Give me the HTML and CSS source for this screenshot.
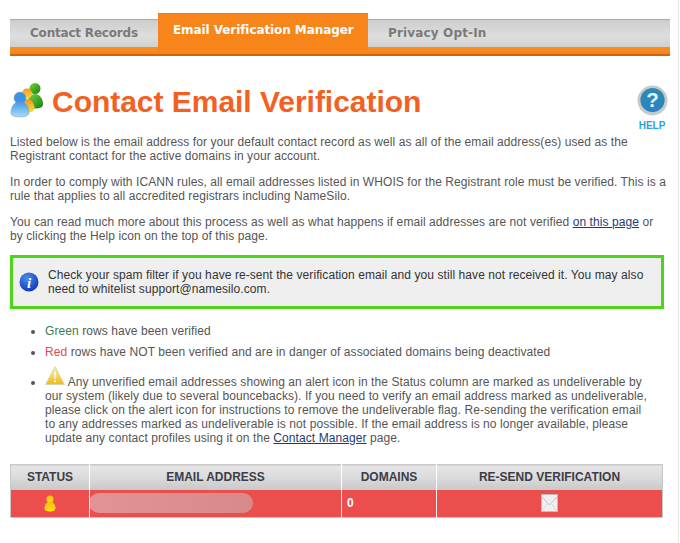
FILE: index.html
```html
<!DOCTYPE html>
<html lang="en">
<head>
<meta charset="utf-8">
<title>Contact Email Verification</title>
<link rel="stylesheet" href="styles.css">
</head>
<body>
<div class="page">
  <nav class="tabs">
    <a class="tab tab-first">Contact Records</a>
    <a class="tab tab-active">Email Verification Manager</a>
    <a class="tab tab-last">Privacy Opt-In</a>
  </nav>
  <header class="head">
    <svg class="people" width="36" height="36" viewBox="0 0 36 36">
      <defs>
        <linearGradient id="gb" x1="0" y1="0" x2="0" y2="1"><stop offset="0" stop-color="#3f97e8"/><stop offset="1" stop-color="#a9dcf7"/></linearGradient>
        <linearGradient id="gg" x1="0" y1="0" x2="1" y2="1"><stop offset="0" stop-color="#7bd63f"/><stop offset="1" stop-color="#14800e"/></linearGradient>
        <linearGradient id="gy" x1="0" y1="0" x2="0" y2="1"><stop offset="0" stop-color="#f7952a"/><stop offset="1" stop-color="#f8e02c"/></linearGradient>
      </defs>
      <circle cx="25" cy="5.500" r="5.500" fill="url(#gg)"/>
      <path d="M17 22c0-7 3.500-11 8-11s8 4.500 8 10c0 3.500-3 4.500-8 4.500s-8-1-8-3.500z" fill="url(#gg)"/>
      <circle cx="17" cy="10.500" r="5" fill="url(#gy)"/>
      <path d="M10 27c0-7 3-11 7-11s7.500 4 7.500 9c0 3.500-3.500 4.500-7.500 4.500s-7-.5-7-2.500z" fill="url(#gy)"/>
      <circle cx="10" cy="15" r="6" fill="#3c92e2" stroke="#8a97a8" stroke-width=".5"/>
      <path d="M1 30c0-7 4-11.500 9-11.500s9 4.500 9 11c0 3.500-4 4.500-9 4.500s-9-1-9-4z" fill="url(#gb)" stroke="#8a97a8" stroke-width=".5"/>
    </svg>
    <h1 class="title">Contact Email Verification</h1>
    <div class="help">
      <svg width="31" height="31" viewBox="0 0 32 32">
        <defs><linearGradient id="gh" x1="0" y1="0" x2="0" y2="1"><stop offset="0" stop-color="#2a8db5"/><stop offset="1" stop-color="#2a82c0"/></linearGradient></defs>
        <circle cx="16" cy="16" r="15.500" fill="#c9c9c9"/>
        <circle cx="16" cy="15.500" r="12.500" fill="url(#gh)"/>
        <text class="help-mark" x="16" y="23" text-anchor="middle">?</text>
      </svg>
      <span class="help-label">HELP</span>
    </div>
  </header>
  <p class="para">Listed below is the email address for your default contact record as well as all of the email address(es) used as the Registrant contact for the active domains in your account.</p>
  <p class="para">In order to comply with ICANN rules, all email addresses listed in WHOIS for the Registrant role must be verified. This is a rule that applies to all accredited registrars including NameSilo.</p>
  <p class="para">You can read much more about this process as well as what happens if email addresses are not verified <a class="link">on this page</a> or by clicking the Help icon on the top of this page.</p>
  <div class="notice">
    <svg class="info" width="20" height="20" viewBox="0 0 20 20">
      <defs><radialGradient id="gi" cx=".4" cy=".3" r=".8"><stop offset="0" stop-color="#4c8df0"/><stop offset="1" stop-color="#0b2fb0"/></radialGradient></defs>
      <circle cx="10" cy="10" r="9.500" fill="url(#gi)"/>
      <text class="info-mark" x="10" y="15.500" text-anchor="middle">i</text>
    </svg>
    <p class="notice-text">Check your spam filter if you have re-sent the verification email and you still have not received it. You may also need to whitelist support@namesilo.com.</p>
  </div>
  <ul class="notes">
    <li class="note"><span class="word-green">Green</span> rows have been verified</li>
    <li class="note"><span class="word-red">Red</span> rows have NOT been verified and are in danger of associated domains being deactivated</li>
    <li class="note"><svg class="alert" width="20" height="20" viewBox="0 0 20 20">
        <defs><linearGradient id="ga" x1="0" y1="0" x2="0" y2="1"><stop offset="0" stop-color="#fff3a8"/><stop offset="1" stop-color="#f3b90f"/></linearGradient></defs>
        <path d="M10 .8 19.400 18.500H.6z" fill="url(#ga)" stroke="#d9d2b0" stroke-width="1" stroke-linejoin="round"/>
        <path d="M9 6h2l-.4 7H9.400z" fill="#fff"/><circle cx="10" cy="15.300" r="1.100" fill="#fff"/>
      </svg> Any unverified email addresses showing an alert icon in the Status column are marked as undeliverable by our system (likely due to several bouncebacks). If you need to verify an email address marked as undeliverable, please click on the alert icon for instructions to remove the undeliverable flag. Re-sending the verification email to any addresses marked as undeliverable is not possible. If the email address is no longer available, please update any contact profiles using it on the <a class="link">Contact Manager</a> page.</li>
  </ul>
  <table class="grid">
    <thead>
      <tr>
        <th class="col-status">STATUS</th>
        <th class="col-email">EMAIL ADDRESS</th>
        <th class="col-domains">DOMAINS</th>
        <th class="col-resend">RE-SEND VERIFICATION</th>
      </tr>
    </thead>
    <tbody>
      <tr class="row-red">
        <td class="cell-center">
          <svg class="user" width="12" height="17" viewBox="0 0 12 17">
            <defs><linearGradient id="gu" x1="0" y1="0" x2="0" y2="1"><stop offset="0" stop-color="#f9b91c"/><stop offset="1" stop-color="#ffe600"/></linearGradient></defs>
            <circle cx="6" cy="4" r="3.500" fill="url(#gu)"/>
            <path d="M6 6.500c3 0 5.500 3 5.500 6.500 0 2.500-2.500 3.500-5.500 3.500S.5 15.500.5 13C.5 9.500 3 6.500 6 6.500z" fill="url(#gu)"/>
          </svg>
        </td>
        <td class="cell-email"><span class="blur"></span></td>
        <td class="cell-count">0</td>
        <td class="cell-center">
          <svg class="mail" width="17" height="18" viewBox="0 0 17 18">
            <rect x=".5" y=".5" width="16" height="17" fill="#efefef" stroke="#bdbdbd"/>
            <path d="M1 3l7.500 8L16 3" fill="none" stroke="#c4c4c4"/>
            <path d="M1 17l5.500-7.500M16 17l-5.500-7.500" fill="none" stroke="#dcdcdc"/>
          </svg>
        </td>
      </tr>
    </tbody>
  </table>
</div>
</body>
</html>
```
FILE: styles.css
```css
* { box-sizing: border-box; }
html, body { margin: 0; padding: 0; height: 100%; overflow: hidden; }
body {
  background: #fff;
  font-family: "Liberation Sans", Arial, sans-serif;
  font-size: 12px;
  letter-spacing: .08px;
  color: #555;
  border-right: 1px solid #e8e8e8;
  width: 679px;
}
.page { padding: 13px 0 0 10px; width: 670px; }

.tabs {
  display: flex;
  height: 43px;
  align-items: flex-end;
  border-bottom: 2px solid #c9660f;
  background: linear-gradient(#f89025, #f58319) bottom / 100% 7px no-repeat;
}
.tab {
  font-family: "DejaVu Sans", Verdana, sans-serif;
  font-size: 12px;
  letter-spacing: 0;
  font-weight: bold;
  color: #7a7a7a;
  height: 28px;
  margin-bottom: 7px;
  line-height: 27px;
  background: linear-gradient(#cdcdcd, #dedede 60%, #d0d0d0);
  border-top: 1px solid #aaa;
}
.tab-first { width: 148px; padding-left: 20px; letter-spacing: -.2px; }
.tab-last { flex: 1; padding-left: 20px; letter-spacing: .15px; }
.tab-active {
  width: 210px;
  height: 41px;
  margin-bottom: 0;
  color: #fff;
  background: #f7851a;
  border-top: 1px solid #ee7a12;
  padding-left: 15px;
  line-height: 32px;
  letter-spacing: -.08px;
}

.head { display: flex; align-items: flex-start; height: 79px; padding-top: 28px; }
.people { flex: none; margin: -1px 6px 0 0; }
.title {
  margin: 0;
  flex: 1;
  font-size: 30px;
  letter-spacing: -.03px;
  line-height: 36px;
  font-weight: bold;
  color: #f26122;
}
.help { flex: none; width: 36px; margin: 1px 0 0 0; display: flex; flex-direction: column; align-items: center; }
.help-mark { font: bold 21px "Liberation Sans", sans-serif; fill: #e9f2f7; }
.help-label { font-size: 10px; letter-spacing: 0; font-weight: bold; color: #29a3e0; line-height: 12px; margin-top: 4px; }

.para { margin: 0 0 12px; line-height: 14px; width: 657px; }
.link { color: #1c3a78; text-decoration: underline; }

.notice {
  display: flex;
  align-items: center;
  width: 654px;
  height: 54px;
  padding: 0 15px 0 6px;
  background: #efefef;
  border: 3px solid #4ed419;
  color: #333;
}
.info { flex: none; margin-right: 9px; }
.info-mark { font: italic bold 15px "Liberation Serif", serif; fill: #fff; }
.notice-text { margin: 0; line-height: 14px; }

.notes { margin: 15px 0 0; padding: 0 0 0 35px; list-style: disc; width: 640px; }
.note { margin: 0 0 7px; line-height: 14px; }
.alert { vertical-align: baseline; }
.word-green { color: #3e7d4a; }
.word-red { color: #e8474e; }

.grid {
  width: 653px;
  margin-top: 19px;
  border-collapse: collapse;
  table-layout: fixed;
  border: 1px solid #c8c8c8;
}
.grid th {
  height: 25px;
  padding: 0;
  font-size: 12px;
  font-weight: bold;
  letter-spacing: 0;
  color: #3c3c46;
  background: linear-gradient(#e6e6e6, #dcdcdc 45%, #c8c8c8);
  border-left: 1px solid #fff;
}
.grid th:first-child { border-left: 0; }
.col-status { width: 79px; }
.col-email { width: 252px; }
.col-domains { width: 95px; }
.row-red td { height: 28px; padding: 0; background: #ec4d4d; border-left: 1px solid #eee; }
.row-red td:first-child { border-left: 0; }
.cell-center { text-align: center; }
.user, .mail { display: block; margin: 0 auto; }
.cell-count { color: #fff; font-weight: bold; padding-left: 5px !important; }
.cell-email { overflow: hidden; }
.blur {
  display: block;
  width: 164px;
  height: 20px;
  margin-left: -1px;
  border-radius: 10px;
  background: linear-gradient(90deg, #e29494, #d88a8a);
}
```
